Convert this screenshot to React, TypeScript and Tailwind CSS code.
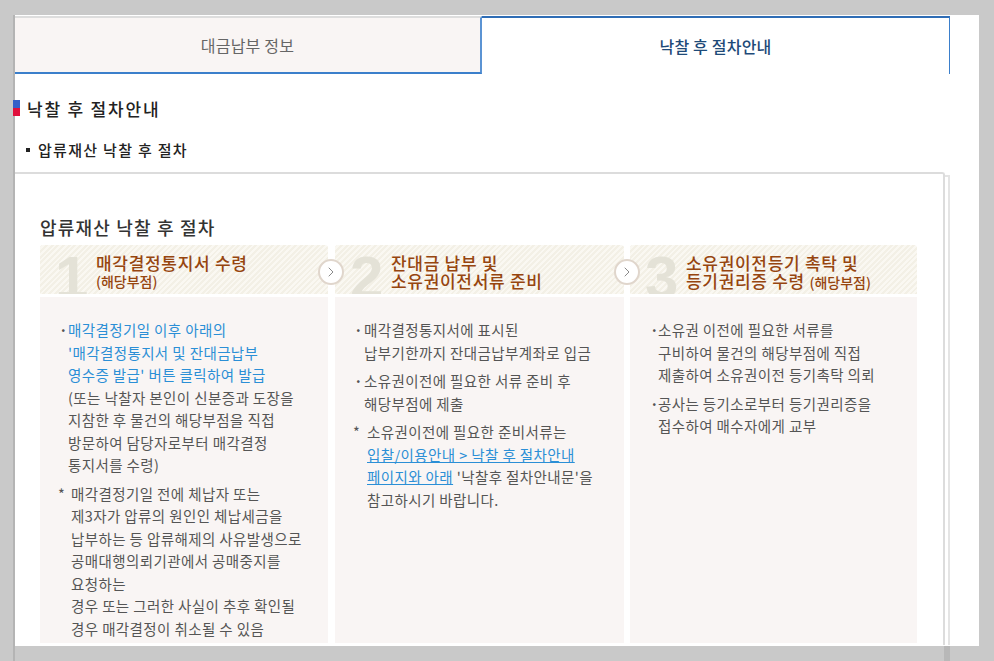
import { ChevronRight } from "lucide-react";

const font = { fontFamily: '"Noto Sans CJK KR", "Noto Sans", sans-serif' };

function Bullet({ mark = "·", markClass = "w-[7px]", children }: any) {
  return (
    <div className="flex">
      <span className={`${markClass} shrink-0 ${mark === "*" ? "font-normal -ml-[1px]" : "font-bold"}`}>{mark}</span>
      <div>{children}</div>
    </div>
  );
}

function Arrow() {
  return (
    <div className="absolute right-[-16px] top-[14px] z-10 w-[26px] h-[26px] rounded-full bg-white border-2 border-[#e0d6cc] flex items-center justify-center">
      <ChevronRight size={16} strokeWidth={1.5} className="text-[#8a8a8a]" />
    </div>
  );
}

function StepHead({ num, arrow, children }: any) {
  return (
    <div className="relative h-[49px] rounded-t-[3px] bg-[repeating-linear-gradient(135deg,#f3f0e6_0px,#f3f0e6_2px,#faf8f2_2px,#faf8f2_4px)]">
      <div className="h-full overflow-hidden flex">
        <span className="w-[56px] shrink-0 pl-[15px] pt-[3px] text-[60px] leading-[60px] font-bold text-[#e4e2d7]" style={{ fontFamily: '"Liberation Sans", sans-serif' }}>
          {num}
        </span>
        <div className="pt-[9px] text-[17px] leading-[18px] tracking-[0.7px] font-medium text-[#96450f] whitespace-nowrap">{children}</div>
      </div>
      {arrow && <Arrow />}
    </div>
  );
}

export default function App() {
  return (
    <div className="relative w-[994px] h-[661px] bg-[#c9c9c9] overflow-hidden pt-[15px] pl-[13px]" style={font}>
      <div className="absolute left-[955px] top-[95px] w-[24px] h-[551px] bg-[#fafafa]" />
      <div className="relative w-[966px] h-[631px] bg-white border-l-2 border-[#b4b4b4]">
        <div className="flex w-[935px] h-[58px] pt-px box-content">
          <div className="w-[467px] bg-[#f9f5f4] border-t-2 border-[#dddddd] border-b-2 border-b-[#3b7fcb] border-r-2 border-r-[#5b93d3] flex items-center justify-center text-[16px] tracking-[0.2px] text-[#666666]">
            대금납부 정보
          </div>
          <div className="flex-1 border-t-2 border-[#2f6db5] border-r border-r-[#3b7fcb] flex items-center justify-center text-[16px] tracking-[0.2px] font-medium text-[#1e4a78]">
            낙찰 후 절차안내
          </div>
        </div>

        <div className="flex items-center mt-[24px] h-[22px]">
          <span className="w-[7px] h-[16px] -ml-[2px] mr-[7px] -mt-[2px] bg-[linear-gradient(#3560c9_50%,#e0103c_50%)]" />
          <h2 className="text-[17px] tracking-[1.8px] font-medium text-[#222222]">낙찰 후 절차안내</h2>
        </div>

        <div className="flex items-center mt-[19px] ml-[11px] h-[22px]">
          <span className="w-[4px] h-[4px] bg-[#222222] mr-[8px]" />
          <h3 className="text-[15px] tracking-[1.3px] font-medium text-[#222222]">압류재산 낙찰 후 절차</h3>
        </div>

        <div className="w-[935px] h-[473px] mt-[11px] flex">
          <div className="w-[930px] h-full border-t-2 border-r-2 border-[#dcdcdc] rounded-tr-[3px] pl-[25px] pt-[41px]">
            <h4 className="text-[18px] leading-[24px] tracking-[1.2px] font-medium text-[#333333] mb-[6px]">압류재산 낙찰 후 절차</h4>
            <div className="flex text-[14.5px] leading-[22.5px] tracking-[0.4px] text-[#555555]">
              <div className="w-[288px] mr-[7px]">
                <StepHead num="1" arrow>
                  <div>매각결정통지서 수령</div>
                  <div className="text-[14px] tracking-normal">(해당부점)</div>
                </StepHead>
                <div className="mt-[3px] h-[346px] bg-[#f9f5f4] pl-[19px] pt-[22px]">
                  <Bullet markClass="w-[9px]">
                    <div className="text-[#2b8fd6]">
                      매각결정기일 이후 아래의
                      <br />
                      '매각결정통지서 및 잔대금납부
                      <br />
                      영수증 발급' 버튼 클릭하여 발급
                    </div>
                    (또는 낙찰자 본인이 신분증과 도장을
                    <br />
                    지참한 후 물건의 해당부점을 직접
                    <br />
                    방문하여 담당자로부터 매각결정
                    <br />
                    통지서를 수령)
                  </Bullet>
                  <div className="mt-[6px]">
                    <Bullet mark="*" markClass="w-[13px]">
                      매각결정기일 전에 체납자 또는
                      <br />
                      제3자가 압류의 원인인 체납세금을
                      <br />
                      납부하는 등 압류해제의 사유발생으로
                      <br />
                      공매대행의뢰기관에서 공매중지를
                      <br />
                      요청하는
                      <br />
                      경우 또는 그러한 사실이 추후 확인될
                      <br />
                      경우 매각결정이 취소될 수 있음
                    </Bullet>
                  </div>
                </div>
              </div>

              <div className="w-[289px] mr-[6px]">
                <StepHead num="2" arrow>
                  <div>잔대금 납부 및</div>
                  <div>소유권이전서류 준비</div>
                </StepHead>
                <div className="mt-[3px] h-[346px] bg-[#f9f5f4] pl-[19px] pt-[22px]">
                  <Bullet markClass="w-[10px]">
                    매각결정통지서에 표시된
                    <br />
                    납부기한까지 잔대금납부계좌로 입금
                  </Bullet>
                  <div className="mt-[6px]">
                    <Bullet markClass="w-[10px]">
                      소유권이전에 필요한 서류 준비 후
                      <br />
                      해당부점에 제출
                    </Bullet>
                  </div>
                  <div className="mt-[6px]">
                    <Bullet mark="*" markClass="w-[14px]">
                      소유권이전에 필요한 준비서류는
                      <br />
                      <span className="text-[#2b8fd6] underline">입찰/이용안내 &gt; 낙찰 후 절차안내</span>
                      <br />
                      <span className="text-[#2b8fd6] underline">페이지와 아래</span> '낙찰후 절차안내문'을
                      <br />
                      참고하시기 바랍니다.
                    </Bullet>
                  </div>
                </div>
              </div>

              <div className="w-[287px]">
                <StepHead num="3">
                  <div>소유권이전등기 촉탁 및</div>
                  <div>
                    등기권리증 수령 <span className="text-[14px] tracking-normal">(해당부점)</span>
                  </div>
                </StepHead>
                <div className="mt-[3px] h-[346px] bg-[#f9f5f4] pl-[20px] pt-[22px]">
                  <Bullet markClass="w-[8px]">
                    소유권 이전에 필요한 서류를
                    <br />
                    구비하여 물건의 해당부점에 직접
                    <br />
                    제출하여 소유권이전 등기촉탁 의뢰
                  </Bullet>
                  <div className="mt-[6px]">
                    <Bullet markClass="w-[8px]">
                      공사는 등기소로부터 등기권리증을
                      <br />
                      접수하여 매수자에게 교부
                    </Bullet>
                  </div>
                </div>
              </div>
            </div>
          </div>
          <div className="w-[5px] mt-[3px] border-r-2 border-t-2 border-[#e4e4e4]" />
        </div>
      </div>
      <div className="absolute left-[944px] top-[646px] w-[6px] h-[15px] bg-[#b8b8b8]" />
      <div className="absolute left-[13px] top-[646px] w-[2px] h-[15px] bg-[#b4b4b4]" />
    </div>
  );
}
